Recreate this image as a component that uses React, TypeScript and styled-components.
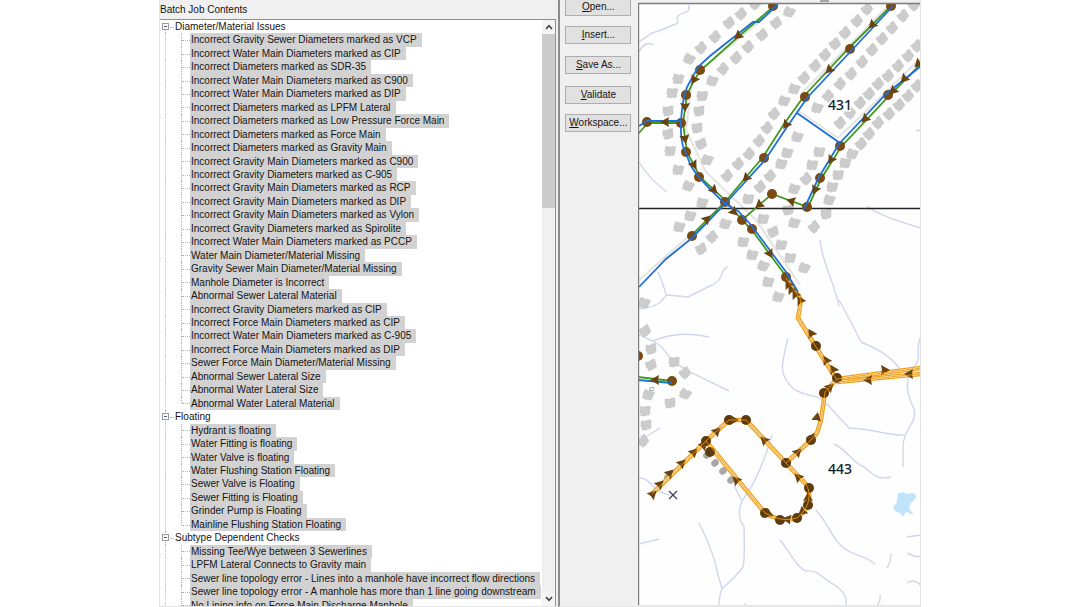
import React from "react";
import styled, { createGlobalStyle } from "styled-components";

const GlobalStyle = createGlobalStyle`
  * { box-sizing: border-box; }
  html, body, #root { height: 100%; }
  body { margin: 0; background: #fff; font-family: "Liberation Sans", Arial, sans-serif; font-size: 10px; color: #141414; }
`;

const Frame = styled.main`
  display: flex;
  height: 100vh;
  padding: 0 159px;
  overflow: hidden;
`;

const TreePane = styled.section`
  flex: 399 1 0;
  min-width: 0;
  display: flex;
  flex-direction: column;
  background: #f0f0f0;
  border-left: 1px solid #e2e2e2;
  border-bottom: 1px solid #e6e6e6;
`;

const PaneTitle = styled.h1`
  margin: 0;
  padding-top: 1px;
  height: 19px;
  line-height: 18px;
  font-size: 10px;
  font-weight: 400;
  flex: none;
`;

const TreeBox = styled.div`
  flex: 1;
  min-height: 0;
  display: flex;
  overflow: hidden;
  margin-right: 2px;
  background: #fff;
  border-top: 1px solid #909090;
  border-right: 1px solid #909090;
`;

const Tree = styled.ul`
  flex: 1;
  min-width: 0;
  height: 592px;
  margin: 0;
  padding: 0;
  list-style: none;
  display: grid;
  grid-auto-rows: 1fr;
`;

const GroupRow = styled.li<{ $first?: boolean }>`
  position: relative;
  display: flex;
  align-items: center;
  gap: 6px;
  padding-left: 2px;
  line-height: 13px;
  &::before {
    content: "";
    position: absolute;
    left: 5px;
    top: ${(p) => (p.$first ? "50%" : "0")};
    bottom: 0;
    border-left: 1px dotted #b4b4b4;
  }
  &::after {
    content: "";
    position: absolute;
    left: 10px;
    width: 4px;
    top: 50%;
    border-top: 1px dotted #b4b4b4;
  }
`;

const Toggle = styled.button`
  position: relative;
  z-index: 1;
  width: 7px;
  height: 7px;
  padding: 0;
  border: 1px solid #9a9a9a;
  background: #fff;
  display: grid;
  place-items: center;
  &::before {
    content: "";
    width: 3px;
    height: 1px;
    background: #4a5a90;
  }
`;

const ItemRow = styled.li<{ $last?: boolean }>`
  position: relative;
  display: flex;
  padding-left: 30px;
  white-space: nowrap;
  background: repeating-linear-gradient(#c4c4c4 0 1px, transparent 1px 2px) 5px 0 / 1px 100% no-repeat;
  &::before {
    content: "";
    position: absolute;
    left: 21px;
    top: 0;
    bottom: ${(p) => (p.$last ? "50%" : "0")};
    border-left: 1px dotted #b4b4b4;
  }
  &::after {
    content: "";
    position: absolute;
    left: 22px;
    width: 8px;
    top: 50%;
    border-top: 1px dotted #b4b4b4;
  }
`;

const ItemLabel = styled.span`
  padding: 0 5px 0 1px;
  line-height: 13px;
  background: #d2d2d2;
`;

const ScrollBar = styled.div`
  flex: none;
  width: 13px;
  display: flex;
  flex-direction: column;
  background: #f0f0f0;
`;

const ScrollButton = styled.button`
  height: 14px;
  flex: none;
  padding: 0;
  border: 0;
  background: #f4f4f4;
  display: grid;
  place-items: center;
`;

const ScrollTrack = styled.div`
  flex: 1;
`;

const ScrollThumb = styled.div`
  height: 174px;
  background: #cbcbcb;
`;

const SidePane = styled.nav`
  flex: none;
  width: 80px;
  display: flex;
  flex-direction: column;
  gap: 12px;
  padding: 0 7px 0 5px;
  overflow: hidden;
  background: #f0f0f0;
  border-left: 2px solid #8c8c8c;
  border-bottom: 1px solid #e6e6e6;
`;

const ButtonGroup = styled.div`
  display: flex;
  flex-direction: column;
  gap: 10px;
  &:first-child { margin-top: -2px; }
`;

const ActionButton = styled.button`
  height: 18px;
  padding: 0;
  border: 1px solid #adadad;
  background: #e1e1e1;
  color: #141414;
  font: inherit;
  line-height: 16px;
`;

const MapPane = styled.section`
  flex: 283 1 0;
  min-width: 0;
  background: #fff;
  border-bottom: 2px solid #e6e6e6;
  svg { display: block; width: 100%; height: 100%; }
`;

const groups: { name: string; items: string[] }[] = [
  {
    name: "Diameter/Material Issues",
    items: [
      "Incorrect Gravity Sewer Diameters marked as VCP",
      "Incorrect Water Main Diameters marked as CIP",
      "Incorrect Diameters marked as SDR-35",
      "Incorrect Water Main Diameters marked as C900",
      "Incorrect Water Main Diameters marked as DIP",
      "Incorrect Diameters marked as LPFM Lateral",
      "Incorrect Diameters marked as Low Pressure Force Main",
      "Incorrect Diameters marked as Force Main",
      "Incorrect Diameters marked as Gravity Main",
      "Incorrect Gravity Main Diameters marked as C900",
      "Incorrect Gravity Diameters marked as C-905",
      "Incorrect Gravity Main Diameters marked as RCP",
      "Incorrect Gravity Main Diameters marked as DIP",
      "Incorrect Gravity Main Diameters marked as Vylon",
      "Incorrect Gravity Diameters marked as Spirolite",
      "Incorrect Water Main Diameters marked as PCCP",
      "Water Main Diameter/Material Missing",
      "Gravity Sewer Main Diameter/Material Missing",
      "Manhole Diameter is Incorrect",
      "Abnormal Sewer Lateral Material",
      "Incorrect Gravity Diameters marked as CIP",
      "Incorrect Force Main Diameters marked as CIP",
      "Incorrect Water Main Diameters marked as C-905",
      "Incorrect Force Main Diameters marked as DIP",
      "Sewer Force Main Diameter/Material Missing",
      "Abnormal Sewer Lateral Size",
      "Abnormal Water Lateral Size",
      "Abnormal Water Lateral Material",
    ],
  },
  {
    name: "Floating",
    items: [
      "Hydrant is floating",
      "Water Fitting is floating",
      "Water Valve is floating",
      "Water Flushing Station Floating",
      "Sewer Valve is Floating",
      "Sewer Fitting is Floating",
      "Grinder Pump is Floating",
      "Mainline Flushing Station Floating",
    ],
  },
  {
    name: "Subtype Dependent Checks",
    items: [
      "Missing Tee/Wye between 3 Sewerlines",
      "LPFM Lateral Connects to Gravity main",
      "Sewer line topology error - Lines into a manhole have incorrect flow directions",
      "Sewer line topology error - A manhole has more than 1 line going downstream",
      "No Lining info on Force Main Discharge Manhole",
    ],
  },
];

const actions = [
  [["O", "pen..."], ["I", "nsert..."]],
  [["S", "ave As..."]],
  [["V", "alidate"], ["W", "orkspace..."]],
];

/* Buildings: x, y, rotation */
const houses: [number, number, number][] = [
  [741, 14, -35], [729, 23, -30], [715, 37, -35], [701, 48, -35], [689, 59, 35], [678, 79, 15], [672, 93, 10], [668, 111, 0], [668, 134, -5],
  [776, 23, -30], [762, 35, -30], [748, 47, -35], [736, 58, -35], [723, 69, -40], [712, 81, 25], [702, 96, 10], [699, 111, 0], [697, 128, 0], [701, 144, -15],
  [774, 114, -35], [767, 128, -35], [759, 141, -35], [755, 4, -30],
  [789, 12, 30], [867, 9, -35], [857, 21, -35], [845, 33, -35], [835, 44, -30], [825, 55, -35], [815, 66, -35], [804, 78, -35], [794, 89, 25], [784, 101, 25],
  [914, 5, -35], [903, 16, -35], [892, 28, -35], [882, 39, -35], [872, 50, -35], [862, 62, -35], [851, 74, -35], [840, 84, -40], [828, 96, -40], [817, 108, 25],
  [917, 46, -35], [908, 56, -35], [898, 66, -35], [888, 76, -35], [878, 84, -35], [869, 94, -35], [860, 103, -35], [850, 113, -40], [840, 123, -35],
  [917, 86, -35], [908, 96, -35], [899, 105, -35], [889, 114, -35], [878, 123, -35], [869, 134, -35], [861, 144, -35], [797, 137, 25],
  [670, 151, 10], [678, 170, 15], [688, 186, 30], [707, 160, 25], [738, 164, -35], [727, 176, -35], [749, 154, -40], [702, 203, 20], [690, 216, 20], [679, 227, 20], [725, 224, 25],
  [712, 237, -35], [701, 249, -20], [748, 199, 15], [760, 187, -35], [770, 176, -35], [763, 219, 15], [773, 232, -15], [743, 242, 15], [752, 255, 20], [763, 266, 30], [768, 282, 20], [778, 297, 25],
  [787, 153, 20], [781, 164, 20], [819, 152, 15], [852, 154, 25], [812, 165, 15], [845, 163, 15], [806, 179, -35], [838, 175, 10], [794, 189, 25], [832, 187, 15], [829, 200, 25], [788, 210, 0], [826, 214, 0], [794, 223, 25], [814, 227, -35],
  [781, 245, 15], [790, 258, 15], [804, 268, 30],
  [644, 303, 25], [645, 331, -25], [651, 349, -5], [651, 365, -15], [674, 362, 5], [685, 373, -30], [685, 394, 35], [648, 395, 25], [670, 403, 0], [645, 411, 5], [646, 425, 0], [643, 441, -35],
];

const nodes: [number, number][] = [
  [773, 6], [700, 70], [686, 95], [681, 123], [647, 122], [686, 152], [891, 6], [850, 49], [805, 97], [888, 95], [840, 146], [699, 177], [764, 158],
  [725, 202], [772, 194], [742, 220], [752, 229], [692, 236], [820, 178], [807, 207], [786, 277], [672, 381], [638, 356],
];
const brownNodes: [number, number][] = [
  [729, 420], [746, 420], [706, 441], [816, 346], [837, 378], [824, 393], [811, 440], [710, 452], [765, 513], [780, 520], [786, 463], [809, 488], [808, 505], [797, 518],
];

/* Flow arrows: x, y, heading in degrees (0 points right) */
const arrows: [number, number, number][] = [
  [738, 36, 140], [694, 80, 120], [685, 107, 90], [685, 139, 80], [665, 122, 180], [872, 25, 135], [829, 70, 135], [786, 125, 125], [918, 64, 135],
  [904, 79, 135], [893, 91, 135], [865, 119, 135], [694, 165, 60], [714, 190, 45], [746, 178, 135], [707, 219, -45], [734, 212, 45], [759, 205, 140],
  [770, 254, 60], [831, 160, 120], [815, 190, 115], [791, 201, 195], [655, 380, 180],
  [734, 420, 0], [717, 431, -45], [764, 440, 225], [704, 445, -45], [811, 333, -120], [826, 360, -120], [833, 369, -120], [830, 387, -45], [817, 417, -80], [800, 300, 240],
  [868, 380, 180], [885, 370, 0], [909, 374, 180], [653, 494, -45], [660, 484, -45], [670, 473, -45], [682, 463, -45], [694, 452, -45], [736, 480, 225], [769, 514, 25],
  [798, 452, -45], [798, 477, 225], [808, 497, -90], [802, 512, 140], [787, 519, 190], [788, 284, 240], [791, 289, 240], [795, 294, 240], [812, 437, -60],
];

const streams = [
  "M638 42C645 39 648 34 655 32S668 27 676 24C681 21 674 20 679 15C686 10 689 15 689 5",
  "M639 52C644 43 648 42 654 45",
  "M639 162Q650 180 667 192",
  "M639 309Q658 307 663 299",
  "M658 272Q664 286 666 295Q666 296 662 300M666 295Q680 296 688 297L708 287Q721 282 722 273Q725 267 728 267",
  "M638 334C650 341 656 340 665 351C673 364 684 368 692 373L729 391M653 341Q678 330 709 337",
  "M644 438L660 428",
  "M639 478C651 477 651 492 670 495",
  "M639 544L659 539",
  "M820 240C822 262 833 279 839 306",
  "M839 300C847 314 856 332 861 342C880 350 890 356 900 369",
  "M867 206C875 213 900 222 921 228",
  "M788 338C781 365 778 376 795 390C813 399 815 393 824 401Q838 416 849 428C875 429 888 436 904 435",
  "M921 336C914 350 923 357 914 367C902 382 909 398 914 409C918 424 903 427 903 448V467",
  "M834 444C850 452 850 461 864 467C873 475 878 480 891 477",
  "M772 435Q760 477 742 501Q736 517 744 526Q745 560 743 567Q738 574 722 589Q719 596 719 606M734 485Q738 494 742 501M699 523C709 543 715 560 717 571L722 589",
  "M816 510C833 530 830 537 845 549C857 557 863 554 875 564",
  "M780 540C790 552 797 568 806 571C818 570 821 577 833 584C848 593 848 603 844 607",
  "M907 537L921 535M907 553Q917 558 921 556M891 553Q891 562 887 568M907 583Q915 578 921 586M876 607Q881 602 880 595M745 607V603",
  "M916 131L921 130",
];

const greenLines =
  "M773 7L738 37L701 70L694 80L687 95L683 123L687 152L700 177L726 201L742 220L752 230L771 256L788 279L800 297M891 6L849 48L804 96L784 124L763 157L725 202L691 236M921 64L889 96L841 147L821 179L808 207L772 194L742 220M647 124L638 134M647 123H681M672 381L638 377";
const blueLines =
  "M778 4L759 22H753L710 56L698 67L687 87C681 104 679 132 683 146L691 166C700 181 713 192 724 203L738 211L751 225L786 272L798 292M893 6L852 50L807 98L787 127L765 160L725 204L692 238L666 259L639 287M797 113L840 143M921 66L886 94L839 144L819 177L804 209M639 126L647 121H681M672 383L638 380";

const orangeLines = [
  "M786 278L801 300L798 318L816 347L837 380",
  "M837 379L921 368",
  "M837 382L921 374",
  "M837 379L825 392L821 420L817 433L811 440L786 463",
  "M652 494L706 441L729 420H746L786 463L802 480Q810 487 809 497Q808 510 797 518Q782 523 765 513L706 441",
];

function SewerMap() {
  return (
    <svg viewBox="638 0 283 605" preserveAspectRatio="xMinYMin slice" role="img" aria-label="Sewer network map">
      <defs>
        <path id="house" d="M-5 -4H1V-5H5V3H4V4H1V5H-4V2H-5Z" />
        <path id="arrow" d="M5 0L-4 -5L-3 0L-4 5Z" />
      </defs>
      <rect x="638" y="0" width="283" height="607" fill="#fefefe" />
      <g fill="none" stroke="#cfd7ec" strokeWidth="1.4">
        {streams.map((d) => <path key={d} d={d} />)}
      </g>
      <path d="M898 493L904 492L906 494L912 493Q917 494 916 498L911 503L909 508L914 515L906 512L903 517L900 513L895 511L893 507L897 502Z" fill="#bfe4fb" />
      <g fill="none" stroke="#e4e4e2" strokeWidth="2">
        <path d="M639 280L690 235M703 68L776 8M692 80L686 130L706 172L756 220L800 285M800 95L888 6M797 110L838 138M838 138L921 58" />
      </g>
      <g fill="#cccccc" stroke="#bdbdbd" strokeWidth="0.4">
        {houses.map(([x, y, r], i) => (
          <use key={i} href="#house" transform={`translate(${x} ${y}) rotate(${r})`} />
        ))}
      </g>
      <g fill="#a8a8a8">
        {[[707, 455], [715, 463], [723, 471], [731, 480], [668, 477]].map(([x, y]) => (
          <ellipse key={x} cx={x} cy={y} rx="4" ry="3.4" transform={`rotate(-40 ${x} ${y})`} />
        ))}
      </g>
      <path d="M638 208.5H921" stroke="#222" strokeWidth="1.4" />
      <path d={greenLines} fill="none" stroke="#3f9a1c" strokeWidth="1.8" />
      <g fill="none">
        {orangeLines.map((d) => (
          <g key={d}>
            <path d={d} stroke="#f2a01c" strokeWidth="4.6" />
            <path d={d} stroke="#fff0c4" strokeWidth="2" />
            <path d={d} stroke="#c9a878" strokeWidth="0.8" strokeDasharray="3 2" />
          </g>
        ))}
      </g>
      <g fill="#7a4a10">
        {nodes.map(([x, y]) => <circle key={`${x}-${y}`} cx={x} cy={y} r="5" />)}
      </g>
      <g fill="#5e3b0c">
        {brownNodes.map(([x, y]) => <circle key={`${x}-${y}`} cx={x} cy={y} r="5" />)}
      </g>
      <path d={blueLines} fill="none" stroke="#1f6fd6" strokeWidth="1.8" />
      <g fill="#6a430f">
        {arrows.map(([x, y, r], i) => (
          <use key={i} href="#arrow" transform={`translate(${x} ${y}) rotate(${r})`} />
        ))}
      </g>
      <g fill="none" stroke="#f2a01c" strokeWidth="0.8">
        {orangeLines.map((d) => <path key={d} d={d} />)}
      </g>
      <path d="M669 491L677 499M677 491L669 499" stroke="#3c3c5c" strokeWidth="1.2" />
      <g fontFamily="'Noto Sans', sans-serif" fill="#10222c" stroke="#fff" paintOrder="stroke">
        <text x="828" y="110" fontSize="14" fontWeight="500" strokeWidth="3">431</text>
        <text x="828" y="474" fontSize="14" fontWeight="500" strokeWidth="3">443</text>
        <text x="649" y="391" fontSize="6" fill="#555" strokeWidth="0">C!</text>
      </g>
      <rect x="638" y="0" width="283" height="3" fill="#f0f0f0" />
      <rect x="820" y="0" width="9" height="2" fill="#a6a6a6" />
      <path d="M638 3.5H921" stroke="#7c7c7c" strokeWidth="1.4" />
      <path d="M638.6 3V605" stroke="#7c7c7c" strokeWidth="1.2" />
      <path d="M920.5 3V605" stroke="#e2e2e2" strokeWidth="1" />
    </svg>
  );
}

function Chevron({ up }: { up?: boolean }) {
  return (
    <svg width="8" height="6" viewBox="0 0 8 6" aria-hidden="true">
      <path d={up ? "M1 5L4 1.6L7 5" : "M1 1L4 4.4L7 1"} fill="none" stroke="#404040" strokeWidth="1.6" />
    </svg>
  );
}

export default function App() {
  return (
    <>
      <GlobalStyle />
      <Frame>
        <TreePane>
          <PaneTitle>Batch Job Contents</PaneTitle>
          <TreeBox>
            <Tree>
              {groups.map((group, g) => (
                <React.Fragment key={group.name}>
                  <GroupRow $first={g === 0}>
                    <Toggle aria-label={`Collapse ${group.name}`} />
                    <span>{group.name}</span>
                  </GroupRow>
                  {group.items.map((item, i) => (
                    <ItemRow key={item} $last={g < 2 && i === group.items.length - 1}>
                      <ItemLabel>{item}</ItemLabel>
                    </ItemRow>
                  ))}
                </React.Fragment>
              ))}
            </Tree>
            <ScrollBar>
              <ScrollButton aria-label="Scroll up"><Chevron up /></ScrollButton>
              <ScrollTrack><ScrollThumb /></ScrollTrack>
              <ScrollButton aria-label="Scroll down"><Chevron /></ScrollButton>
            </ScrollBar>
          </TreeBox>
        </TreePane>
        <SidePane>
          {actions.map((group) => (
            <ButtonGroup key={group[0][0]}>
              {group.map(([key, rest]) => (
                <ActionButton key={key}><u>{key}</u>{rest}</ActionButton>
              ))}
            </ButtonGroup>
          ))}
        </SidePane>
        <MapPane>
          <SewerMap />
        </MapPane>
      </Frame>
    </>
  );
}
